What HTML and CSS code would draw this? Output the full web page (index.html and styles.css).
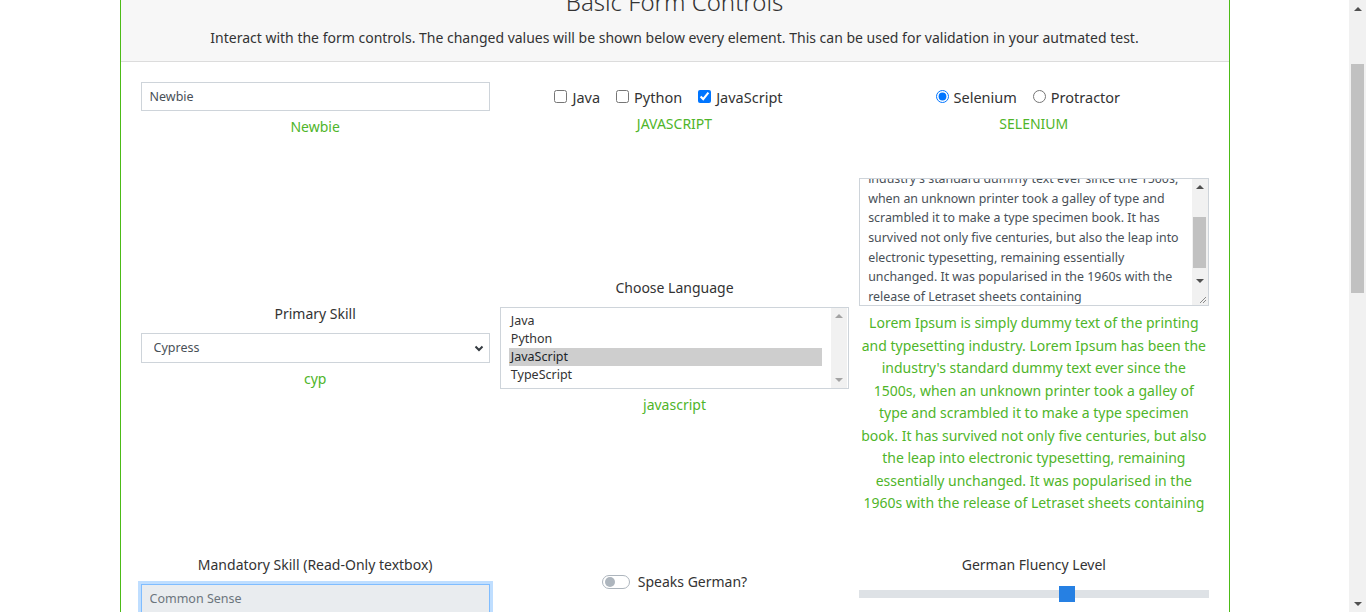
FILE: index.html
```html
<!DOCTYPE html>
<html lang="en">
<head>
<meta charset="utf-8">
<title>Basic Form Controls</title>
<link rel="stylesheet" href="styles.css">
</head>
<body>
<div class="viewport" id="viewport">
  <div class="container">
    <div class="card">
      <div class="card-header">
        <h1>Basic Form Controls</h1>
        <p>Interact with the form controls. The changed values will be shown below every element. This can be used for validation in your autmated test.</p>
      </div>
      <div class="card-body">
        <div class="row">
          <div class="cell">
            <input class="form-control" type="text" value="Newbie">
            <div class="out out-gap">Newbie</div>
          </div>
          <div class="cell">
            <div class="choices">
              <label class="choice"><input type="checkbox"> Java</label>
              <label class="choice"><input type="checkbox"> Python</label>
              <label class="choice"><input type="checkbox" checked> JavaScript</label>
            </div>
            <div class="out out-gap">JAVASCRIPT</div>
          </div>
          <div class="cell">
            <div class="choices">
              <label class="choice"><input type="radio" name="tool" checked> Selenium</label>
              <label class="choice"><input type="radio" name="tool"> Protractor</label>
            </div>
            <div class="out out-gap">SELENIUM</div>
          </div>
        </div>

        <div class="row row-mid">
          <div class="cell">
            <div class="label">Primary Skill</div>
            <select class="form-control select">
              <option>Cypress</option>
            </select>
            <div class="out out-gap">cyp</div>
          </div>
          <div class="cell">
            <div class="label">Choose Language</div>
            <div class="list-wrap">
              <select class="listbox" multiple size="4">
                <option>Java</option>
                <option>Python</option>
                <option selected>JavaScript</option>
                <option>TypeScript</option>
              </select>
              <div class="vscroll">
                <span class="arrow arrow-up light"></span>
                <span class="vtrack"></span>
                <span class="arrow arrow-down light"></span>
              </div>
            </div>
            <div class="out out-gap">javascript</div>
          </div>
          <div class="cell">
            <div class="ta-wrap">
              <textarea class="textarea" id="notes">Lorem Ipsum is simply dummy text of the printing and typesetting industry. Lorem Ipsum has been the industry's standard dummy text ever since the 1500s, when an unknown printer took a galley of type and scrambled it to make a type specimen book. It has survived not only five centuries, but also the leap into electronic typesetting, remaining essentially unchanged. It was popularised in the 1960s with the release of Letraset sheets containing</textarea>
              <div class="vscroll">
                <span class="arrow arrow-up"></span>
                <span class="vtrack"><span class="thumb ta-thumb"></span></span>
                <span class="arrow arrow-down"></span>
                <span class="corner">
                  <svg width="16" height="16" viewBox="0 0 16 16"><path d="M14 8L8 14M14 11L11 14" stroke="#8a8a8a" stroke-width="1" fill="none"/></svg>
                </span>
              </div>
            </div>
            <div class="out out-para">Lorem Ipsum is simply dummy text of the printing and typesetting industry. Lorem Ipsum has been the industry's standard dummy text ever since the 1500s, when an unknown printer took a galley of type and scrambled it to make a type specimen book. It has survived not only five centuries, but also the leap into electronic typesetting, remaining essentially unchanged. It was popularised in the 1960s with the release of Letraset sheets containing</div>
          </div>
        </div>

        <div class="row row-start">
          <div class="cell">
            <div class="label">Mandatory Skill (Read-Only textbox)</div>
            <input class="form-control readonly" type="text" value="Common Sense" readonly>
          </div>
          <div class="cell cell-switch">
            <label class="switch"><span class="track"><span class="knob"></span></span> Speaks German?</label>
          </div>
          <div class="cell">
            <div class="label">German Fluency Level</div>
            <input class="range" type="range" min="0" max="5" value="3">
          </div>
        </div>
      </div>
    </div>
  </div>
</div>
<div class="page-scroll">
  <span class="arrow arrow-up"></span>
  <span class="ptrack"><span class="thumb page-thumb"></span></span>
  <span class="arrow arrow-down"></span>
</div>
<script src="script.js"></script>
</body>
</html>
```

FILE: styles.css
```css
html,
body {
  height: 100%;
  overflow: hidden;
}

body {
  margin: 0;
  display: flex;
  font-family: "Noto Sans", "Open Sans", sans-serif;
  font-size: 14px;
  line-height: 1.5;
  color: #212529;
  background: #fff;
}

.viewport {
  flex: 1;
  height: 100%;
  overflow: hidden;
}

.container {
  width: 1110px;
  margin: 0 auto;
  padding: 91px 0 900px;
}

.card {
  border: 1px solid #4cbb17;
  background: #fff;
}

.card-header {
  background: #f7f7f7;
  border-bottom: 1px solid #dcdcdc;
  text-align: center;
  padding: 12px 20px;
}

.card-header h1 {
  margin: 0 0 8px;
  font-size: 24px;
  line-height: 34px;
  font-weight: 300;
  color: #333;
}

.card-header p {
  margin: 0;
  font-size: 14px;
  line-height: 22px;
  color: #333;
}

.card-body {
  padding: 20px;
}

.row {
  display: grid;
  grid-template-columns: repeat(3, 1fr);
  column-gap: 10px;
  align-items: center;
  margin-bottom: 40px;
}

.row-mid {
  margin-bottom: 39px;
}

.row-start {
  align-items: start;
}

.cell {
  display: flex;
  flex-direction: column;
  align-items: center;
  text-align: center;
  min-width: 0;
}

.label {
  font-size: 14px;
  line-height: 22px;
  color: #333;
  margin-bottom: 8px;
}

.out {
  color: #4fb52a;
  font-size: 14px;
  line-height: 22px;
}

.out-gap {
  margin-top: 5px;
}

.out-para {
  margin-top: 6px;
  line-height: 22.5px;
}

.form-control {
  width: 100%;
  box-sizing: border-box;
  height: 29px;
  border: 1px solid #ced4da;
  border-radius: 0;
  padding: 0 8px;
  font-family: inherit;
  font-size: 12.5px;
  color: #495057;
  background: #fff;
  outline: none;
}

.select {
  height: 30px;
  padding: 0 12px;
  -webkit-appearance: none;
  appearance: none;
  background-image: url("data:image/svg+xml,%3Csvg xmlns='http://www.w3.org/2000/svg' width='10' height='8' viewBox='0 0 10 8'%3E%3Cpath d='M1.5 2.5l3.5 3.5 3.5-3.5' fill='none' stroke='%23343a40' stroke-width='2'/%3E%3C/svg%3E");
  background-repeat: no-repeat;
  background-position: right 5px center;
}

.readonly {
  background: #e9ecef;
  color: #6c757d;
  border-color: #80bdff;
  box-shadow: 0 0 0 3px rgba(0, 123, 255, 0.25);
}

.choices {
  display: flex;
  justify-content: center;
  gap: 4px;
  font-size: 14.5px;
  line-height: 22px;
  color: #333;
}

.choice {
  display: flex;
  align-items: center;
  gap: 5px;
  margin-right: 12px;
}

.choice input {
  margin: 0;
  width: 13px;
  height: 13px;
}

.list-wrap {
  display: flex;
  width: 100%;
  box-sizing: border-box;
  height: 82px;
  border: 1px solid #ced4da;
  background: #fff;
}

.listbox {
  flex: 1;
  min-width: 0;
  border: 0;
  padding: 4px 9px 4px 8px;
  font-family: inherit;
  font-size: 12.5px;
  color: #333;
  outline: none;
  overflow: hidden;
}

.listbox option {
  padding: 0 2px 1px;
}

.listbox option:checked {
  background: #cecece;
  color: #212529;
}

.list-wrap .vscroll {
  margin: 0 1px 0 0;
}

.ta-wrap {
  display: flex;
  width: 100%;
  box-sizing: border-box;
  height: 128px;
  border: 1px solid #ced4da;
  background: #fff;
}

.textarea {
  flex: 1;
  min-width: 0;
  border: 0;
  padding: 6px 8px;
  font-family: inherit;
  font-size: 12.4px;
  line-height: 19.6px;
  color: #495057;
  resize: none;
  outline: none;
  overflow: hidden;
}

.vscroll {
  display: flex;
  flex-direction: column;
  width: 16px;
  background: #f1f1f1;
}

.vtrack {
  flex: 1;
  display: flex;
  flex-direction: column;
  align-items: center;
}

.thumb {
  display: block;
  background: #c1c1c1;
}

.ta-thumb {
  width: 13px;
  height: 51px;
  margin-top: 22px;
}

.corner {
  height: 16px;
  background: #f1f1f1;
}

.corner svg {
  display: block;
}

.arrow {
  position: relative;
  height: 16px;
  flex: none;
}

.arrow::after {
  content: "";
  position: absolute;
  left: 50%;
  top: 50%;
  margin-left: -4px;
  border-left: 4px solid transparent;
  border-right: 4px solid transparent;
}

.arrow-up::after {
  margin-top: -2px;
  border-bottom: 4px solid #505050;
}

.arrow-down::after {
  margin-top: -2px;
  border-top: 4px solid #505050;
}

.arrow.light.arrow-up::after {
  border-bottom-color: #a3a3a3;
}

.arrow.light.arrow-down::after {
  border-top-color: #a3a3a3;
}

.page-scroll {
  display: flex;
  flex-direction: column;
  width: 17px;
  height: 100%;
  flex: none;
  background: #f1f1f1;
}

.page-scroll .arrow {
  height: 17px;
}

.ptrack {
  flex: 1;
  display: flex;
  flex-direction: column;
  align-items: center;
}

.page-thumb {
  width: 13px;
  height: 229px;
  margin-top: 47px;
}

.cell-switch {
  margin-top: 17px;
}

.switch {
  display: flex;
  align-items: center;
  gap: 8px;
  font-size: 14px;
  line-height: 22px;
  color: #333;
}

.track {
  display: inline-block;
  width: 26px;
  height: 12px;
  border: 1px solid #adb5bd;
  border-radius: 8px;
  background: #fff;
  position: relative;
}

.knob {
  position: absolute;
  left: 2px;
  top: 1px;
  width: 10px;
  height: 10px;
  border-radius: 50%;
  background: #adb5bd;
}

.range {
  -webkit-appearance: none;
  appearance: none;
  width: 100%;
  height: 16px;
  margin: 2px 0 0;
  background: transparent;
}

.range::-webkit-slider-runnable-track {
  height: 8px;
  background: #dee2e6;
}

.range::-webkit-slider-thumb {
  -webkit-appearance: none;
  appearance: none;
  width: 16px;
  height: 16px;
  margin-top: -4px;
  background: #2680e3;
  border: 0;
}
```

FILE: script.js
```js
document.getElementById('viewport').scrollTop = 119;
var ta = document.getElementById('notes');
ta.scrollTop = ta.scrollHeight - ta.clientHeight - 7;
```
